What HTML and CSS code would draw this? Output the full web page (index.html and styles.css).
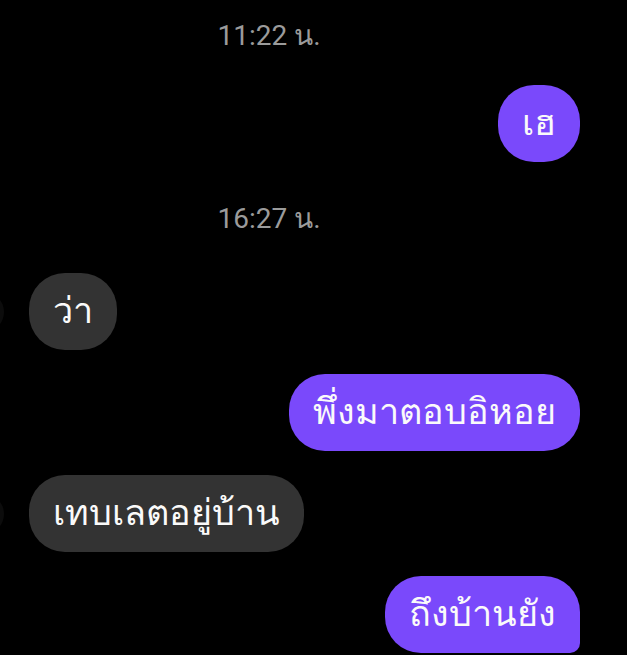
FILE: index.html
```html
<!DOCTYPE html>
<html lang="th">
  <head>
    <meta charset="UTF-8" />
    <meta name="viewport" content="width=device-width, initial-scale=1.0" />
    <title>Chat</title>
    <link rel="stylesheet" href="styles.css">
  </head>
  <body>
    <div class="chat">
      <div class="time first">11:22 น.</div>
      <div class="row out">
        <div class="bubble mine">เฮ</div>
      </div>

      <div class="time">16:27 น.</div>
      <div class="row in">
        <span class="avatar"></span>
        <div class="bubble theirs">ว่า</div>
      </div>
      <div class="row out">
        <div class="bubble mine">พึ่งมาตอบอิหอย</div>
      </div>
      <div class="row in">
        <span class="avatar"></span>
        <div class="bubble theirs">เทบเลตอยู่บ้าน</div>
      </div>
      <div class="row out">
        <div class="bubble mine last">ถึงบ้านยัง</div>
      </div>
    </div>
  </body>
</html>
```

FILE: styles.css
```css
body {
  margin: 0;
  background-color: #000;
  color: #fafafa;
  font-family: Roboto, "Noto Sans", sans-serif;
}

.chat {
  display: flex;
  flex-direction: column;
  padding: 16px 47px 0 0;
  overflow: hidden;
  height: 639px;
}

.time {
  height: 40px;
  line-height: 40px;
  padding-right: 42px;
  text-align: center;
  font-size: 28px;
  color: #9b9b9b;
  margin: 13px 0 34px;
}

.time.first {
  margin: 0 0 29px;
}

.row {
  display: flex;
  align-items: center;
  margin-bottom: 24px;
}

.row.out {
  justify-content: flex-end;
}

.avatar {
  width: 40px;
  height: 40px;
  margin-left: -36px;
  margin-right: 25px;
  border-radius: 50%;
  background-color: #0c0c0c;
}

.bubble {
  height: 77px;
  line-height: 77px;
  padding: 0 24px;
  border-radius: 36px;
  font-size: 36px;
  white-space: nowrap;
}

.mine {
  background-color: #7a49fb;
}

.theirs {
  background-color: #333;
}

.last {
  border-bottom-right-radius: 10px;
}
```
